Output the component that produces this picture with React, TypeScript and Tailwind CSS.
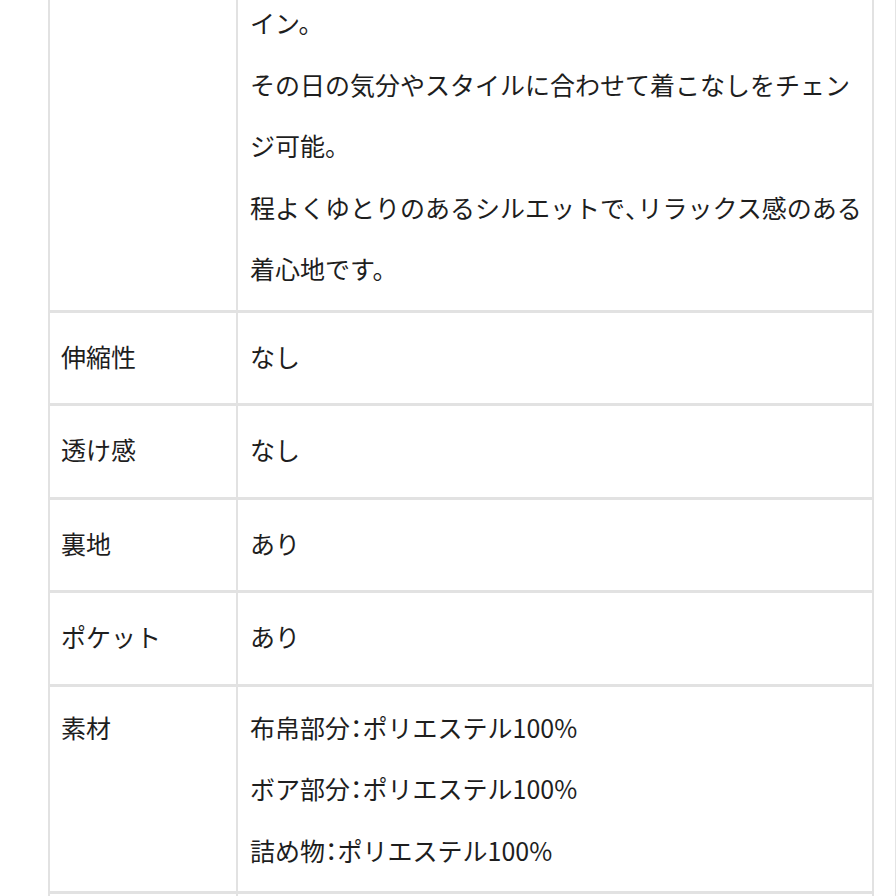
const rows: { label: string; values: string[] }[] = [
  { label: '伸縮性', values: ['なし'] },
  { label: '透け感', values: ['なし'] },
  { label: '裏地', values: ['あり'] },
  { label: 'ポケット', values: ['あり'] },
  { label: '素材', values: ['布帛部分：ポリエステル100%', 'ボア部分：ポリエステル100%', '詰め物：ポリエステル100%'] },
];

const font = { fontFamily: '"Noto Sans CJK JP", "Noto Sans", sans-serif' };
const half = { fontFeatureSettings: '"halt"' };

// half-width punctuation like the source page
function Text({ value }: { value: string }) {
  const parts = value.split(/([、：])/);
  return (
    <>
      {parts.map((p, i) =>
        p === '、' || p === '：' ? (
          <span key={i} style={half}>
            {p}
          </span>
        ) : (
          <span key={i}>{p}</span>
        )
      )}
    </>
  );
}

export default function App() {
  return (
    <div className="h-[896px] w-[896px] overflow-hidden bg-white border-r border-[#e4e4e4] text-[#1e1e1e] text-[25px]" style={font}>
      <div className="ml-[48px] w-[826px] -mt-[8px] border-x-2 border-[#e2e2e2]">
        {/* Description row, continues from above */}
        <div className="flex border-b-[3px] border-[#e2e2e2]">
          <div className="w-[188px] shrink-0 border-r-2 border-[#e2e2e2]" />
          <div className="flex-1 pl-[12px] pr-[10px] pb-[10px] leading-[61.5px]">
            <p>イン。</p>
            <p>その日の気分やスタイルに合わせて着こなしをチェンジ可能。</p>
            <p>
              <Text value="程よくゆとりのあるシルエットで、リラックス感のある着心地です。" />
            </p>
          </div>
        </div>

        {rows.map((row) => (
          <div key={row.label} className="flex border-b-[3px] border-[#e2e2e2]">
            <div
              className={`w-[188px] shrink-0 border-r-2 border-[#e2e2e2] pl-[11px] leading-[61.5px] ${
                row.values.length > 1 ? 'pt-[10px]' : 'py-[13px] pb-[16px]'
              }`}
            >
              {row.label}
            </div>
            <div
              className={`flex-1 pl-[12px] pr-[20px] leading-[61.5px] ${
                row.values.length > 1 ? 'pt-[10px] pb-[10px]' : 'pt-[13px] pb-[16px]'
              }`}
            >
              {row.values.map((v) => (
                <p key={v}>
                  <Text value={v} />
                </p>
              ))}
            </div>
          </div>
        ))}

        <div className="flex">
          <div className="w-[188px] h-[90px] shrink-0 border-r-2 border-[#e2e2e2]" />
          <div className="flex-1" />
        </div>
      </div>
    </div>
  );
}
